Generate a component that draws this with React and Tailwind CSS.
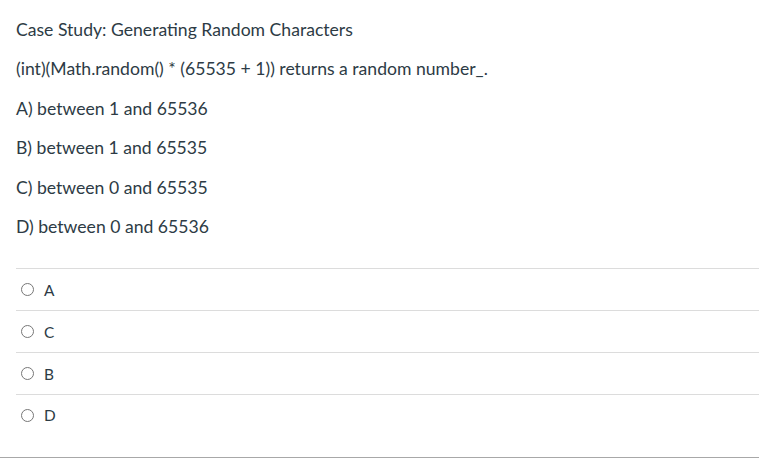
export default function App() {
  const lines = [
    "Case Study: Generating Random Characters",
    "(int)(Math.random() * (65535 + 1)) returns a random number_.",
    "A) between 1 and 65536",
    "B) between 1 and 65535",
    "C) between 0 and 65535",
    "D) between 0 and 65536",
  ];
  const opts = ["A", "C", "B", "D"];
  return (
    <div className="w-[759px] h-[470px] bg-white text-[#2d3b45]" style={{ fontFamily: "Lato, 'Noto Sans', sans-serif" }}>
      <div className="pl-4 pt-[17px] flex flex-col gap-[13px] text-[17.6px] leading-[26.4px]">
        {lines.map((l, i) => (
          <div key={i}>{l}</div>
        ))}
      </div>
      <div className="ml-4 mt-[28px] border-t border-[#dcdcdc]">
        {opts.map((o, i) => (
          <div
            key={o}
            className={`flex h-[42px] ${i < 3 ? "items-center border-b border-[#dcdcdc]" : "h-[62px] items-start pt-[10px]"}`}
          >
            <span className="ml-[5px] w-[13px] h-[13px] rounded-full border border-[#777] bg-white inline-block shrink-0 self-center" style={i === 3 ? { alignSelf: "flex-start", marginTop: 4 } : undefined} />
            <span className="ml-[10px] text-[15.4px] leading-[20px]">{o}</span>
          </div>
        ))}
      </div>
      <div className="border-t border-[#a8a8a8]" />
    </div>
  );
}
